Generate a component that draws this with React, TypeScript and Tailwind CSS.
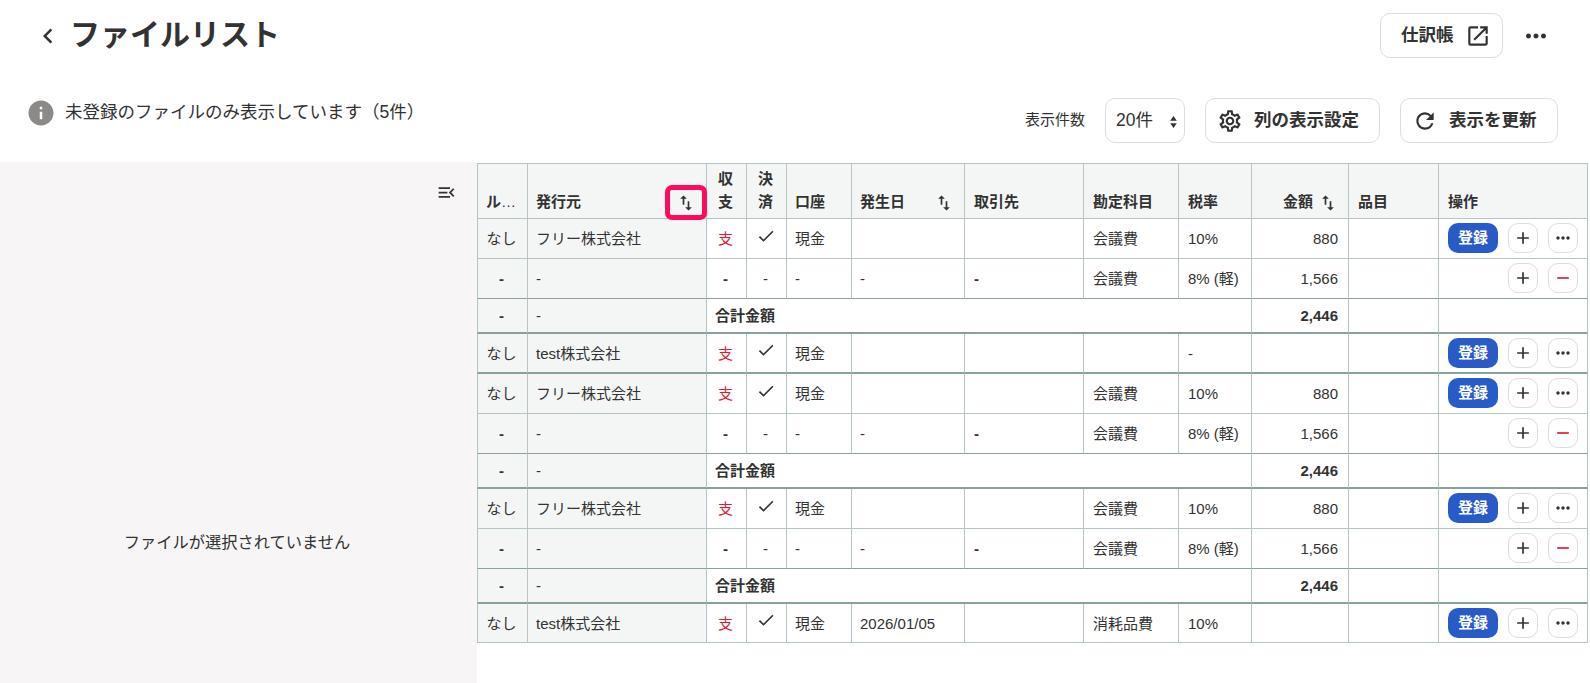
import type { ReactNode } from "react";
import { clsx } from "clsx";
import {
  MdAdd,
  MdCheck,
  MdChevronLeft,
  MdInfo,
  MdMenuOpen,
  MdMoreHoriz,
  MdOpenInNew,
  MdOutlineSettings,
  MdRefresh,
  MdRemove,
  MdSwapVert,
} from "react-icons/md";

type Row = {
  kind: "main" | "sub" | "total";
  issuer?: string;
  date?: string;
  account?: string;
  tax?: string;
  amount?: string;
  // last row of a file's group gets a thick divider
  groupEnd?: boolean;
};

const freeeGroup: Row[] = [
  { kind: "main", issuer: "フリー株式会社", account: "会議費", tax: "10%", amount: "880" },
  { kind: "sub", account: "会議費", tax: "8% (軽)", amount: "1,566" },
  { kind: "total", amount: "2,446", groupEnd: true },
];

const rows: Row[] = [
  ...freeeGroup,
  { kind: "main", issuer: "test株式会社", tax: "-", groupEnd: true },
  ...freeeGroup,
  ...freeeGroup,
  { kind: "main", issuer: "test株式会社", date: "2026/01/05", account: "消耗品費", tax: "10%" },
];

const columnWidths = [51, 179, 40, 40, 65, 113, 119, 95, 73, 97, 90, 149];

function Th({ className = "pr-2.5 pl-2 text-left", children }: { className?: string; children?: ReactNode }) {
  return (
    <th
      className={clsx(
        "relative h-[56px] border-t border-r border-b border-[#b4c5c3] bg-[#f4f6f6] pb-[5px] align-bottom font-bold first:border-l",
        className
      )}
    >
      {children}
    </th>
  );
}

function SortIcon() {
  return <MdSwapVert className="relative top-px size-5 shrink-0" />;
}

function IconButton({ children }: { children: ReactNode }) {
  return (
    <button className="flex size-[30px] items-center justify-center rounded-[10px] border border-[#dedcdc] bg-white">
      {children}
    </button>
  );
}

function TableRow({ row, last }: { row: Row; last: boolean }) {
  const line = row.groupEnd
    ? "border-b-2 border-b-[#8aa09e]"
    : row.kind === "sub"
      ? "border-b border-b-[#8aa09e]"
      : "border-b border-b-[#b4c5c3]";
  const height = row.kind === "total" ? "h-[35px]" : last ? "h-[39px]" : "h-[40px]";
  const base = clsx("border-r border-r-[#b4c5c3] pt-0.5 pb-0", line, height);
  const cell = clsx(base, "pr-2.5 pl-2 align-middle");
  const wide = clsx(base, "px-[9px] align-middle");
  const frozen = clsx(cell, "bg-[#f4f6f6]");

  if (row.kind === "total") {
    return (
      <tr>
        <td className={clsx(frozen, "border-l border-l-[#b4c5c3] text-center font-bold")}>-</td>
        <td className={frozen}>-</td>
        <td colSpan={7} className={clsx(cell, "font-bold")}>合計金額</td>
        <td className={clsx(cell, "text-right font-bold")}>{row.amount}</td>
        <td className={wide} />
        <td className={wide} />
      </tr>
    );
  }

  const main = row.kind === "main";
  return (
    <tr>
      <td className={clsx(frozen, "border-l border-l-[#b4c5c3] text-center whitespace-nowrap", !main && "font-bold")}>
        {main ? "なし" : "-"}
      </td>
      <td className={frozen}>{main ? row.issuer : "-"}</td>
      <td className={clsx(cell, "text-center", main ? "text-[#dc1e32]" : "font-bold")}>{main ? "支" : "-"}</td>
      <td className={clsx(cell, "text-center")}>
        {main ? <MdCheck className="relative -top-1 mx-auto size-5" /> : "-"}
      </td>
      <td className={cell}>{main ? "現金" : "-"}</td>
      <td className={cell}>{main ? row.date : "-"}</td>
      <td className={clsx(wide, "font-bold")}>{main ? "" : "-"}</td>
      <td className={wide}>{row.account}</td>
      <td className={clsx(wide, "whitespace-nowrap")}>{row.tax}</td>
      <td className={clsx(cell, "text-right")}>{row.amount}</td>
      <td className={wide} />
      <td className={clsx(base, "px-[9px] align-top")}>
        <div className="flex justify-end gap-2.5 pt-0.5">
          {main && (
            <button className="h-[30px] w-[50px] rounded-[10px] bg-[#285ac8] font-bold text-white">登録</button>
          )}
          <IconButton>
            <MdAdd className="size-5" />
          </IconButton>
          <IconButton>
            {main ? <MdMoreHoriz className="size-5" /> : <MdRemove className="size-5 text-[#dc1e32]" />}
          </IconButton>
        </div>
      </td>
    </tr>
  );
}

export default function App() {
  return (
    <div className="flex h-[683px] w-[1590px] flex-col overflow-hidden bg-white font-['Liberation_Sans','Noto_Sans_CJK_JP',sans-serif] text-[15px] leading-[22.5px] text-[#323232]">
      <header className="flex h-[71px] items-center pr-[39px] pl-[33px]">
        <MdChevronLeft className="size-[30px]" />
        <h1 className="ml-[7px] pb-0.5 text-[30px] leading-[45px] font-bold">ファイルリスト</h1>
        <div className="ml-auto flex items-center gap-[18px]">
          <button className="flex h-[45px] w-[123px] items-center gap-[11px] rounded-[10px] border border-[#dedcdc] pl-5 text-[17.5px] font-bold whitespace-nowrap">
            仕訳帳
            <MdOpenInNew className="size-[26px] shrink-0" />
          </button>
          <MdMoreHoriz className="size-[30px]" />
        </div>
      </header>

      <div className="flex h-[91px] items-start pr-8 pl-[26px]">
        <div className="mt-[26px] flex h-[31px] items-center gap-[9px] text-[17.5px]">
          <MdInfo className="size-[30px] shrink-0 text-[#8c8989]" />
          <p className="whitespace-nowrap">未登録のファイルのみ表示しています（5件）</p>
        </div>
        <div className="mt-[27px] ml-auto flex items-center">
          <span className="mr-5">表示件数</span>
          <button className="flex h-[45px] w-20 shrink-0 items-center justify-between rounded-[10px] border border-[#dedcdc] pr-[7px] pl-2.5 text-[17.5px]">
            20件
            <svg viewBox="0 0 7 12" className="relative top-px h-3 w-[7px]" fill="currentColor">
              <path d="M3.5 0 6.8 4.8H.2zM3.5 12 .2 7.2h6.6z" />
            </svg>
          </button>
          <button className="ml-5 flex h-[45px] w-[175px] shrink-0 items-center gap-[11px] rounded-[10px] border border-[#dedcdc] pl-[11px] text-[17.5px] font-bold whitespace-nowrap">
            <MdOutlineSettings className="size-[26px]" />
            列の表示設定
          </button>
          <button className="ml-5 flex h-[45px] w-[158px] shrink-0 items-center gap-[11px] rounded-[10px] border border-[#dedcdc] pl-[11px] text-[17.5px] font-bold whitespace-nowrap">
            <MdRefresh className="size-[26px]" />
            表示を更新
          </button>
        </div>
      </div>

      <div className="flex min-h-0 flex-1">
        <aside className="flex w-[477px] shrink-0 flex-col bg-[#f7f5f6]">
          <div className="flex justify-end pt-5 pr-5">
            <MdMenuOpen className="size-[21px]" />
          </div>
          <p className="mt-[327px] pr-[3px] text-center text-[16.25px] leading-6">ファイルが選択されていません</p>
        </aside>

        <main className="pt-px">
          <table className="w-[1111px] table-fixed border-separate border-spacing-0">
            <colgroup>
              {columnWidths.map((width, i) => (
                <col key={i} style={{ width }} />
              ))}
            </colgroup>
            <thead>
              <tr>
                <Th className="pr-2 pl-2 text-left whitespace-nowrap">
                  ル<span className="font-normal">…</span>
                </Th>
                <Th>
                  <div className="flex items-center justify-between">
                    発行元
                    <SortIcon />
                  </div>
                  <span className="absolute -right-px -bottom-[2px] z-10 h-[35px] w-[42px] rounded-[7px] border-5 border-[#ff0a5f]" />
                </Th>
                <Th className="pr-2.5 pl-2 text-center">収支</Th>
                <Th className="pr-2.5 pl-2 text-center">決済</Th>
                <Th>口座</Th>
                <Th>
                  <div className="flex items-center justify-between">
                    発生日
                    <SortIcon />
                  </div>
                </Th>
                <Th className="px-[9px] text-left">取引先</Th>
                <Th className="px-[9px] text-left">勘定科目</Th>
                <Th className="px-[9px] text-left">税率</Th>
                <Th>
                  <div className="flex items-center justify-end gap-[5px]">
                    金額
                    <SortIcon />
                  </div>
                </Th>
                <Th className="px-[9px] text-left">品目</Th>
                <Th className="px-[9px] text-left">操作</Th>
              </tr>
            </thead>
            <tbody>
              {rows.map((row, i) => (
                <TableRow key={i} row={row} last={i === rows.length - 1} />
              ))}
            </tbody>
          </table>
        </main>
      </div>
    </div>
  );
}
